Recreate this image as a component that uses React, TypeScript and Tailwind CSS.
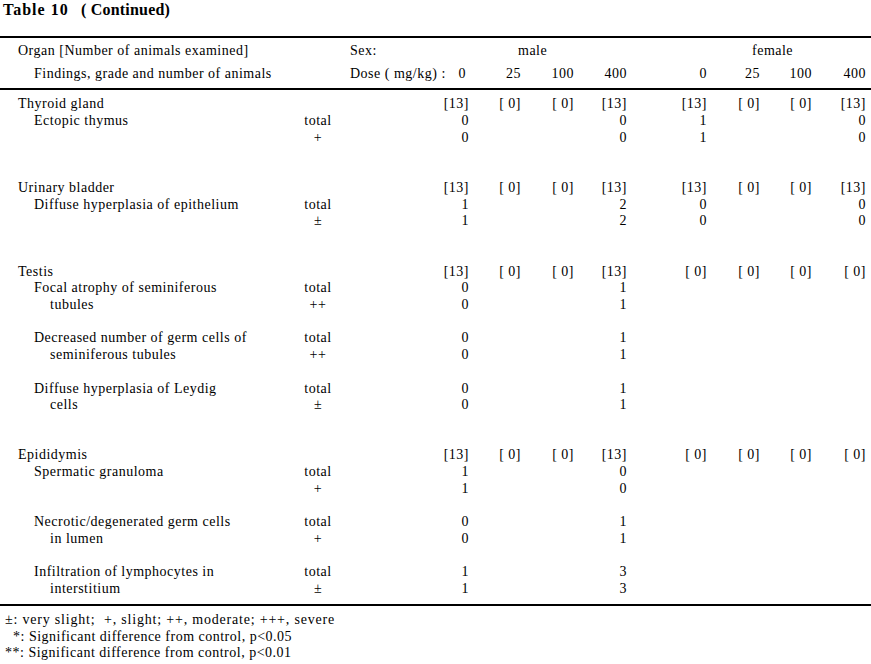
import React from "react";

type Row = { label?: string; indent?: number; grade?: string; v?: string[] };

const B = "[13]";
const Z = "[ 0]";

const rows: Row[] = [
  { label: "Thyroid gland", indent: 0, v: [B, Z, Z, B, B, Z, Z, B] },
  { label: "Ectopic thymus", indent: 1, grade: "total", v: ["0", "", "", "0", "1", "", "", "0"] },
  { grade: "+", v: ["0", "", "", "0", "1", "", "", "0"] },
  {},
  {},
  { label: "Urinary bladder", indent: 0, v: [B, Z, Z, B, B, Z, Z, B] },
  { label: "Diffuse hyperplasia of epithelium", indent: 1, grade: "total", v: ["1", "", "", "2", "0", "", "", "0"] },
  { grade: "±", v: ["1", "", "", "2", "0", "", "", "0"] },
  {},
  {},
  { label: "Testis", indent: 0, v: [B, Z, Z, B, Z, Z, Z, Z] },
  { label: "Focal atrophy of seminiferous", indent: 1, grade: "total", v: ["0", "", "", "1"] },
  { label: "tubules", indent: 2, grade: "++", v: ["0", "", "", "1"] },
  {},
  { label: "Decreased number of germ cells of", indent: 1, grade: "total", v: ["0", "", "", "1"] },
  { label: "seminiferous tubules", indent: 2, grade: "++", v: ["0", "", "", "1"] },
  {},
  { label: "Diffuse hyperplasia of Leydig", indent: 1, grade: "total", v: ["0", "", "", "1"] },
  { label: "cells", indent: 2, grade: "±", v: ["0", "", "", "1"] },
  {},
  {},
  { label: "Epididymis", indent: 0, v: [B, Z, Z, B, Z, Z, Z, Z] },
  { label: "Spermatic granuloma", indent: 1, grade: "total", v: ["1", "", "", "0"] },
  { grade: "+", v: ["1", "", "", "0"] },
  {},
  { label: "Necrotic/degenerated germ cells", indent: 1, grade: "total", v: ["0", "", "", "1"] },
  { label: "in lumen", indent: 2, grade: "+", v: ["0", "", "", "1"] },
  {},
  { label: "Infiltration of lymphocytes in", indent: 1, grade: "total", v: ["1", "", "", "3"] },
  { label: "interstitium", indent: 2, grade: "±", v: ["1", "", "", "3"] },
];

const colW = ["w-[128px]", "w-[52px]", "w-[53px]", "w-[53px]", "w-[80px]", "w-[53px]", "w-[52px]", "w-[54px]"];
const indentCls = ["pl-[18px]", "pl-[34px]", "pl-[50px]"];

function DataRow({ r }: { r: Row }) {
  return (
    <div className="flex h-[16.72px] items-center leading-none whitespace-nowrap">
      <div className={`w-[295px] ${indentCls[r.indent ?? 0]}`}>{r.label ?? ""}</div>
      <div className="w-[46px] text-center">{r.grade ?? ""}</div>
      {colW.map((w, i) => (
        <div key={i} className={`${w} text-right`}>
          {r.v?.[i] ?? ""}
        </div>
      ))}
    </div>
  );
}

export default function App() {
  const doses = ["25", "100", "400", "0", "25", "100", "400"];
  return (
    <div className="w-[871px] h-[664px] bg-white text-black font-['Liberation_Serif',serif] text-[14px] tracking-[0.5px] overflow-hidden">
      <div className="h-[36px] pl-[3px] pt-[1px] font-bold text-[16px] leading-[18px] whitespace-pre flex">
        <span className="w-[78px] tracking-[1px]">Table 10</span>
        <span className="tracking-[0.2px]">( Continued)</span>
      </div>
      <div className="h-[2px] bg-black" />
      <div className="pt-[4px] h-[50px]">
        <div className="flex h-[17px] items-center leading-none whitespace-nowrap">
          <div className="w-[350px] pl-[18px]">Organ [Number of animals examined]</div>
          <div className="w-[168px]">Sex:</div>
          <div className="w-[234px]">male</div>
          <div>female</div>
        </div>
        <div className="h-[6px]" />
        <div className="flex h-[17px] items-center leading-none whitespace-nowrap">
          <div className="w-[341px] pl-[34px]">Findings, grade and number of animals</div>
          <div className="w-[128px] flex justify-between pl-[9px] pr-[3px]">
            <span>Dose ( mg/kg) :</span>
            <span>0</span>
          </div>
          {doses.map((d, i) => (
            <div key={i} className={`${colW[i + 1]} text-right`}>
              {d}
            </div>
          ))}
        </div>
      </div>
      <div className="h-[2px] bg-black" />
      <div className="pt-[6px] h-[514px]">
        {rows.map((r, i) => (
          <DataRow key={i} r={r} />
        ))}
      </div>
      <div className="h-[2px] bg-black" />
      <div className="pt-[6px] pl-[5px] leading-[16.5px] whitespace-pre">
        <div className="tracking-[0.8px]">{"±: very slight;  +, slight; ++, moderate; +++, severe"}</div>
        <div>{"  *: Significant difference from control, p<0.05"}</div>
        <div>{"**: Significant difference from control, p<0.01"}</div>
      </div>
    </div>
  );
}
